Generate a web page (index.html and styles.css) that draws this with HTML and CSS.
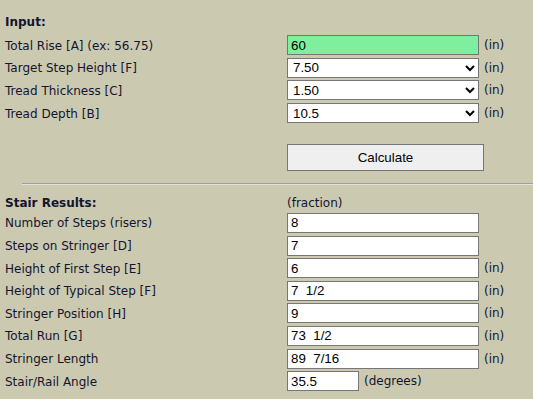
FILE: index.html
```html
<!DOCTYPE html>
<html>
<head>
    <link rel="stylesheet" href="styles.css">
</head>
<body>
    <div class="calc">
        <div class="head head-input">Input:</div>

        <div class="row">
            <label class="label">Total Rise [A] (ex: 56.75)</label>
            <div class="cell">
                <input class="field field-green" type="text" id="rise" value="60">
                <span class="unit">(in)</span>
            </div>
        </div>
        <div class="row">
            <label class="label">Target Step Height [F]</label>
            <div class="cell">
                <select class="field" id="step">
                    <option>7.00</option>
                    <option>7.25</option>
                    <option selected>7.50</option>
                    <option>7.75</option>
                </select>
                <span class="unit">(in)</span>
            </div>
        </div>
        <div class="row">
            <label class="label">Tread Thickness [C]</label>
            <div class="cell">
                <select class="field" id="thick">
                    <option>1.00</option>
                    <option selected>1.50</option>
                    <option>2.00</option>
                </select>
                <span class="unit">(in)</span>
            </div>
        </div>
        <div class="row">
            <label class="label">Tread Depth [B]</label>
            <div class="cell">
                <select class="field" id="depth">
                    <option>10.0</option>
                    <option selected>10.5</option>
                    <option>11.0</option>
                </select>
                <span class="unit">(in)</span>
            </div>
        </div>

        <div class="button-row">
            <button class="button">Calculate</button>
        </div>

        <div class="rule"></div>

        <div class="row head-results">
            <div class="head">Stair Results:</div>
            <div class="cell">(fraction)</div>
        </div>

        <div class="row">
            <label class="label">Number of Steps (risers)</label>
            <div class="cell"><input class="field" type="text" value="8"></div>
        </div>
        <div class="row">
            <label class="label">Steps on Stringer [D]</label>
            <div class="cell"><input class="field" type="text" value="7"></div>
        </div>
        <div class="row">
            <label class="label">Height of First Step [E]</label>
            <div class="cell"><input class="field" type="text" value="6"><span class="unit">(in)</span></div>
        </div>
        <div class="row">
            <label class="label">Height of Typical Step [F]</label>
            <div class="cell"><input class="field" type="text" value="7  1/2"><span class="unit">(in)</span></div>
        </div>
        <div class="row">
            <label class="label">Stringer Position [H]</label>
            <div class="cell"><input class="field" type="text" value="9"><span class="unit">(in)</span></div>
        </div>
        <div class="row">
            <label class="label">Total Run [G]</label>
            <div class="cell"><input class="field" type="text" value="73  1/2"><span class="unit">(in)</span></div>
        </div>
        <div class="row">
            <label class="label">Stringer Length</label>
            <div class="cell"><input class="field" type="text" value="89  7/16"><span class="unit">(in)</span></div>
        </div>
        <div class="row">
            <label class="label">Stair/Rail Angle</label>
            <div class="cell"><input class="field field-short" type="text" value="35.5"><span class="unit">(degrees)</span></div>
        </div>
    </div>
</body>
</html>
```

FILE: styles.css
```css
body {
    margin: 0;
    background-color: #cbcab1;
    font-family: "DejaVu Sans", Verdana, sans-serif;
    font-size: 12px;
    color: #14142e;
}

.calc {
    padding-top: 11px;
}

.head {
    font-weight: bold;
}

.head-input {
    height: 23px;
    line-height: 22px;
    padding-left: 5px;
}

.row {
    display: grid;
    grid-template-columns: 282px auto;
    align-items: center;
    height: 22.6px;
    padding-left: 5px;
}

.label {
    padding-top: 1px;
}

.head-results {
    height: 19px;
    margin-top: 7.7px;
    padding-top: 2px;
    box-sizing: border-box;
}

.cell {
    display: flex;
    align-items: center;
}

.field {
    box-sizing: border-box;
    width: 192px;
    height: 20px;
    margin: 0;
    padding: 1px 3px;
    border: 1px solid #767676;
    background-color: #fff;
    font-family: "Liberation Sans", Arial, sans-serif;
    font-size: 13.33px;
    color: #000;
}

select.field {
    padding: 0 0 0 1px;
}

.field-green {
    background-color: #80ee9f;
}

.field-short {
    width: 72px;
}

.unit {
    margin-left: 5px;
}

.button-row {
    padding-left: 287px;
    margin-top: 19.6px;
}

.button {
    box-sizing: border-box;
    width: 197px;
    height: 27px;
    margin: 0;
    border: 1px solid #767676;
    background-color: #efefef;
    font-family: "Liberation Sans", Arial, sans-serif;
    font-size: 13.33px;
    color: #000;
}

.rule {
    margin: 12px 0 0 22px;
    border-top: 1px solid #9e9e9a;
    border-bottom: 1px solid #e4e4dc;
}
```
